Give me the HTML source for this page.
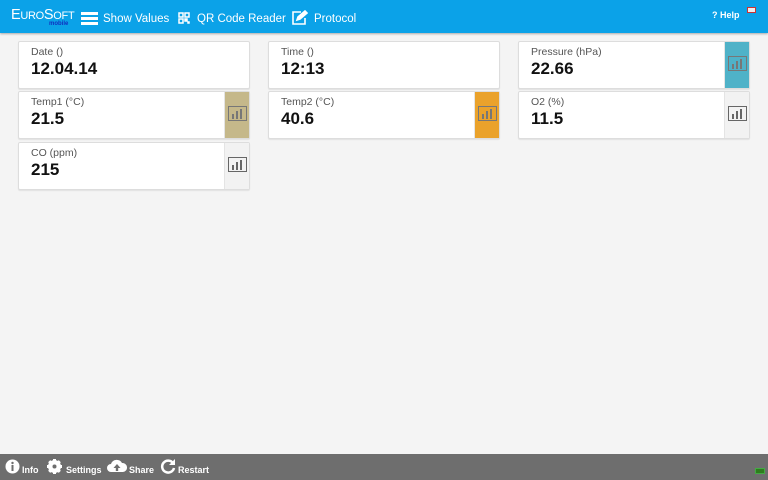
<!DOCTYPE html>
<html><head><style>
*{margin:0;padding:0;box-sizing:border-box}
body{width:768px;height:480px;background:#f4f4f4;font-family:"Liberation Sans",Arial,sans-serif;position:relative;overflow:hidden}
.hdr{position:absolute;left:0;top:0;width:768px;height:33px;background:#0ba2e8;color:#fff;box-shadow:0 1px 2px rgba(0,0,0,.3)}
.hdr span.t{position:absolute;top:13px;font-size:11.5px}
.card{position:absolute;width:232px;height:48px;background:#fff;border:1px solid #ddd;border-radius:2px;box-shadow:0 1px 1px rgba(0,0,0,.08)}
.lab{position:absolute;left:12px;top:4px;font-size:10.5px;color:#555}
.val{position:absolute;left:12px;top:17px;font-size:17px;font-weight:bold;color:#111}
.ib{position:absolute;right:0;top:0;width:25px;height:46px;border-left:1px solid #e4e4e4}
.ib svg{position:absolute;left:3px;top:14px}
.ftr{position:absolute;left:0;top:454px;width:768px;height:26px;background:#6e6e6e;color:#fff;font-size:9px;font-weight:bold}
.ftr span{position:absolute;top:11px}
</style></head><body>
<div class="hdr">
<div style="position:absolute;left:11px;top:7px;font-size:14.5px;letter-spacing:-0.3px">E<span style="font-size:11px">URO</span>S<span style="font-size:11px">OFT</span></div>
<div style="position:absolute;left:49px;top:21px;font-size:6px;font-weight:bold;color:#1030c0">mobile</div>
<svg style="position:absolute;left:81px;top:12px" width="17" height="13"><rect x="0" y="0" width="17" height="3" fill="#fff"/><rect x="0" y="5" width="17" height="3" fill="#fff"/><rect x="0" y="10" width="17" height="3" fill="#fff"/></svg>
<span class="t" style="left:103px">Show Values</span>
<svg style="position:absolute;left:178px;top:12px" width="12" height="12" fill="none" stroke="#fff" stroke-width="1.5"><rect x="1" y="1" width="4" height="4"/><rect x="7" y="1" width="4" height="4"/><rect x="1" y="7" width="4" height="4"/><rect x="7" y="7" width="2" height="2" fill="#fff"/><rect x="10" y="10" width="1" height="1" fill="#fff"/></svg>
<span class="t" style="left:197px">QR Code Reader</span>
<svg style="position:absolute;left:291px;top:10px" width="17" height="15" fill="none" stroke="#fff" stroke-width="1.6"><path d="M10 2H2v12h12V8"/><path d="M6 10l1-3 7-6 2 2-7 6z" fill="#fff"/></svg>
<span class="t" style="left:314px">Protocol</span>
<span class="t" style="left:712px;top:10px;font-size:9px;font-weight:bold">? Help</span>
<div style="position:absolute;left:747px;top:7px;width:9px;height:6px;background:#eee;border:1px solid #c33"></div>
</div>

<div class="card" style="left:18px;top:41px"><div class="lab">Date ()</div><div class="val">12.04.14</div></div>
<div class="card" style="left:268px;top:41px"><div class="lab">Time ()</div><div class="val">12:13</div></div>
<div class="card" style="left:518px;top:41px"><div class="lab">Pressure (hPa)</div><div class="val">22.66</div><div class="ib" style="background:#4fb2c8"><svg width="19" height="15"><rect x="0.5" y="0.5" width="18" height="14" fill="none" stroke="#777"/><rect x="4" y="8" width="2" height="5" fill="#777"/><rect x="8" y="5" width="2" height="8" fill="#777"/><rect x="12" y="3" width="2" height="10" fill="#777"/></svg></div></div>

<div class="card" style="left:18px;top:91px"><div class="lab">Temp1 (°C)</div><div class="val">21.5</div><div class="ib" style="background:#c5b88a"><svg width="19" height="15"><rect x="0.5" y="0.5" width="18" height="14" fill="none" stroke="#777"/><rect x="4" y="8" width="2" height="5" fill="#777"/><rect x="8" y="5" width="2" height="8" fill="#777"/><rect x="12" y="3" width="2" height="10" fill="#777"/></svg></div></div>
<div class="card" style="left:268px;top:91px"><div class="lab">Temp2 (°C)</div><div class="val">40.6</div><div class="ib" style="background:#eaa22b"><svg width="19" height="15"><rect x="0.5" y="0.5" width="18" height="14" fill="none" stroke="#777"/><rect x="4" y="8" width="2" height="5" fill="#777"/><rect x="8" y="5" width="2" height="8" fill="#777"/><rect x="12" y="3" width="2" height="10" fill="#777"/></svg></div></div>
<div class="card" style="left:518px;top:91px"><div class="lab">O2 (%)</div><div class="val">11.5</div><div class="ib" style="background:#f2f2f2"><svg width="19" height="15"><rect x="0.5" y="0.5" width="18" height="14" fill="none" stroke="#666"/><rect x="4" y="8" width="2" height="5" fill="#666"/><rect x="8" y="5" width="2" height="8" fill="#666"/><rect x="12" y="3" width="2" height="10" fill="#666"/></svg></div></div>

<div class="card" style="left:18px;top:142px"><div class="lab">CO (ppm)</div><div class="val">215</div><div class="ib" style="background:#f2f2f2"><svg width="19" height="15"><rect x="0.5" y="0.5" width="18" height="14" fill="none" stroke="#666"/><rect x="4" y="8" width="2" height="5" fill="#666"/><rect x="8" y="5" width="2" height="8" fill="#666"/><rect x="12" y="3" width="2" height="10" fill="#666"/></svg></div></div>

<div class="ftr">
<svg style="position:absolute;left:5px;top:5px" width="15" height="15"><circle cx="7.5" cy="7.5" r="7" fill="#fff"/><rect x="6.5" y="6" width="2" height="6" fill="#6e6e6e"/><circle cx="7.5" cy="4" r="1.2" fill="#6e6e6e"/></svg>
<span style="left:22px">Info</span>
<svg style="position:absolute;left:47px;top:5px" width="15" height="15"><circle cx="7.5" cy="7.5" r="5" fill="none" stroke="#fff" stroke-width="3"/><g stroke="#fff" stroke-width="3"><path d="M7.5 0v15M0 7.5h15M2.2 2.2l10.6 10.6M12.8 2.2L2.2 12.8"/></g><circle cx="7.5" cy="7.5" r="2" fill="#6e6e6e"/></svg>
<span style="left:66px">Settings</span>
<svg style="position:absolute;left:107px;top:5px" width="20" height="14"><path d="M4 13a4 4 0 010-8 6 6 0 0111-1 4.5 4.5 0 011 9z" fill="#fff"/><path d="M10 5l-3.5 4h2.3v3h2.4V9h2.3z" fill="#6e6e6e"/></svg>
<span style="left:129px">Share</span>
<svg style="position:absolute;left:160px;top:4px" width="16" height="16"><path d="M13 5A6 6 0 1 0 14 10" fill="none" stroke="#fff" stroke-width="2.5"/><path d="M15 1v6h-6z" fill="#fff"/></svg>
<span style="left:178px">Restart</span>
<div style="position:absolute;left:755px;top:14px;width:10px;height:6px;background:#2e7d1e;border:1px solid #4a4"></div>
</div>
</body></html>
